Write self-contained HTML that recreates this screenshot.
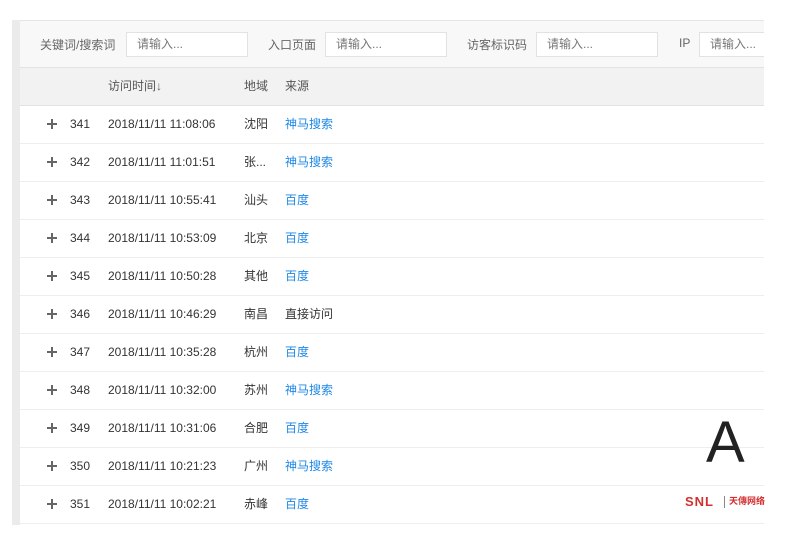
<!DOCTYPE html><html><head><meta charset="utf-8"><style>
body{margin:0;width:800px;height:540px;background:#fff;position:relative;overflow:hidden;font-family:"Liberation Sans","Noto Sans CJK SC",sans-serif;font-size:12px;color:#333}
.bar{position:absolute;left:12px;top:20px;width:8px;height:505px;background:#ebebeb}
.panel{position:absolute;left:20px;top:20px;width:744px;height:505px;border-top:1px solid #e6e6e6;overflow:hidden}
.filter{height:46px;background:#f8f8f8;border-bottom:1px solid #e2e2e2;position:relative}
.filter span{position:absolute;top:15px;color:#666;font-size:12px}
.filter .in{position:absolute;top:11px;height:25px;width:122px;border:1px solid #e2e2e2;background:#fff;box-sizing:border-box;color:#777;padding-left:10px;line-height:23px}
.head{height:37px;background:#f2f2f2;border-bottom:1px solid #e2e2e2;position:relative;color:#555}
.row{height:37px;border-bottom:1px solid #eee;position:relative}
.c{position:absolute;top:0;line-height:37px;white-space:nowrap}
.row .c{line-height:36px}
.plus{position:absolute;left:27px;top:13px;width:10px;height:10px}
.plus:before{content:"";position:absolute;left:0;top:4px;width:10px;height:2px;background:#666}
.plus:after{content:"";position:absolute;left:4px;top:0;width:2px;height:10px;background:#666}
a{color:#1e88e5;text-decoration:none}
</style></head><body>
<div class="bar"></div>
<div class="panel">
<div class="filter">
<span style="left:20px">关键词/搜索词</span><div class="in" style="left:106px">请输入...</div>
<span style="left:248px">入口页面</span><div class="in" style="left:305px">请输入...</div>
<span style="left:447px">访客标识码</span><div class="in" style="left:516px">请输入...</div>
<span style="left:659px">IP</span><div class="in" style="left:679px;width:90px">请输入...</div>
</div>
<div class="head"><div class="c" style="left:88px">访问时间<b style="color:#666">↓</b></div><div class="c" style="left:224px">地域</div><div class="c" style="left:265px">来源</div></div>
<div id="rows"></div>
</div>
<div style="position:absolute;left:706px;top:408px;font-size:58px;color:#222;line-height:70px">A</div>
<div style="position:absolute;left:685px;top:494px;font-size:13px;font-weight:bold;color:#d32f2f;letter-spacing:1px">SNL</div>
<div style="position:absolute;left:724px;top:496px;width:1px;height:12px;background:#888"></div>
<div style="position:absolute;left:729px;top:494px;font-size:9px;font-weight:bold;color:#d32f2f">天傳网络</div>
<script>
var d=[[341,"11:08:06","沈阳","神马搜索",1],[342,"11:01:51","张...","神马搜索",1],[343,"10:55:41","汕头","百度",1],[344,"10:53:09","北京","百度",1],[345,"10:50:28","其他","百度",1],[346,"10:46:29","南昌","直接访问",0],[347,"10:35:28","杭州","百度",1],[348,"10:32:00","苏州","神马搜索",1],[349,"10:31:06","合肥","百度",1],[350,"10:21:23","广州","神马搜索",1],[351,"10:02:21","赤峰","百度",1]];
var h="";d.forEach(function(r){h+='<div class="row"><div class="plus"></div><div class="c" style="left:50px">'+r[0]+'</div><div class="c" style="left:88px">2018/11/11 '+r[1]+'</div><div class="c" style="left:224px">'+r[2]+'</div><div class="c" style="left:265px">'+(r[4]?'<a>'+r[3]+'</a>':r[3])+'</div></div>'});
document.getElementById("rows").innerHTML=h;
</script>
</body></html>
